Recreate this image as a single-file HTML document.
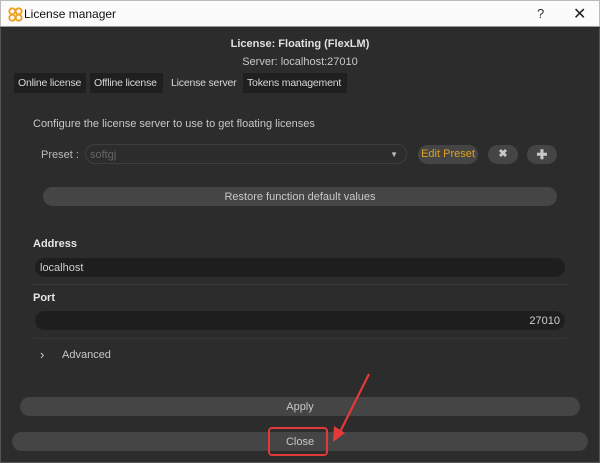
<!DOCTYPE html>
<html><head><style>
*{margin:0;padding:0;box-sizing:border-box}
body{width:600px;height:463px;overflow:hidden;background:#2c2c2c;font-family:"Liberation Sans",sans-serif;font-size:11px;color:#d0d0d0;position:relative}
.a{position:absolute;white-space:nowrap}
.title{left:0;top:0;width:600px;height:27px;background:#fbfbfb;border:1px solid #bbb;border-bottom:1px solid #999;color:#111;font-size:12px}
.btn{background:#454545;border-radius:10px;text-align:center;color:#c8c8c8}
.tab{top:73px;height:20px;line-height:20px;background:#1f1f1f;color:#d8d8d8;padding:0 4px;font-size:10.5px;letter-spacing:-0.2px;overflow:hidden}
.inp{background:#1e1e1e;border-radius:10px;height:19px;line-height:19px}
</style></head><body>
<div class="a title">
<svg class="a" style="left:7px;top:6px" width="15" height="15" viewBox="0 0 15 15"><g fill="none" stroke="#f0a020" stroke-width="1.8"><circle cx="4.3" cy="4.3" r="3"/><circle cx="10.7" cy="4.3" r="3"/><circle cx="4.3" cy="10.7" r="3"/><circle cx="10.7" cy="10.7" r="3"/></g></svg>
<span class="a" style="left:23px;top:6px">License manager</span>
<span class="a" style="left:536px;top:5px;font-size:13px;color:#333">?</span>
<span class="a" style="left:572px;top:3px;font-size:16px;color:#222">✕</span>
</div>
<div class="a" style="left:0;top:28px;width:600px;height:435px;border:1px solid #555;border-top:none"></div>
<div class="a" style="left:0;width:600px;top:38px;text-align:center;font-weight:bold;color:#e0e0e0">License: Floating (FlexLM)</div>
<div class="a" style="left:0;width:600px;top:56px;text-align:center;color:#c8c8c8">Server: localhost:27010</div>
<div class="a tab" style="left:14px;width:72px">Online license</div>
<div class="a tab" style="left:90px;width:73px">Offline license</div>
<div class="a tab" style="left:167px;width:73px;background:none">License server</div>
<div class="a tab" style="left:243px;width:104px">Tokens management</div>
<div class="a" style="left:33px;top:118px;color:#c8c8c8">Configure the license server to use to get floating licenses</div>
<div class="a" style="left:41px;top:149px;color:#bbb">Preset :</div>
<div class="a" style="left:85px;top:144px;width:322px;height:20px;border:1px solid #3e3e3e;border-radius:10px;color:#666;padding:4px 0 0 4px">softgj<span class="a" style="right:8px;top:5px;font-size:8px;color:#bbb">▼</span></div>
<div class="a btn" style="left:418px;top:145px;width:60px;height:19px;line-height:19px;color:#e0a020;font-size:11px">Edit Preset</div>
<div class="a btn" style="left:488px;top:145px;width:30px;height:19px;line-height:19px;font-weight:bold">✖</div>
<div class="a btn" style="left:527px;top:145px;width:30px;height:19px;line-height:19px;font-weight:bold;font-size:13px">✚</div>
<div class="a btn" style="left:43px;top:187px;width:514px;height:19px;line-height:20px">Restore function default values</div>
<div class="a" style="left:33px;top:238px;font-weight:bold;color:#e6e6e6">Address</div>
<div class="a inp" style="left:35px;top:258px;width:530px;padding-left:5px;line-height:20px;color:#d0d0d0">localhost</div>
<div class="a" style="left:33px;top:284px;width:534px;height:1px;background:#3a3a3a"></div>
<div class="a" style="left:33px;top:292px;font-weight:bold;color:#e6e6e6">Port</div>
<div class="a inp" style="left:35px;top:311px;width:530px;padding-right:5px;text-align:right;line-height:20px">27010</div>
<div class="a" style="left:33px;top:338px;width:534px;height:1px;background:#363636"></div>
<div class="a" style="left:40px;top:347px;font-size:13px;color:#ccc">›</div>
<div class="a" style="left:62px;top:349px;color:#c8c8c8">Advanced</div>
<div class="a btn" style="left:20px;top:397px;width:560px;height:19px;line-height:20px">Apply</div>
<div class="a btn" style="left:12px;top:432px;width:576px;height:19px;line-height:20px">Close</div>
<div class="a" style="left:268px;top:427px;width:60px;height:29px;border:2px solid #e03a3a;border-radius:4px"></div>
<svg class="a" style="left:0;top:0" width="600" height="463"><line x1="369" y1="374" x2="340" y2="432" stroke="#e63a3a" stroke-width="2.2"/><path d="M333 442 L334 426 L345 433 Z" fill="#e63a3a"/></svg>
</body></html>
